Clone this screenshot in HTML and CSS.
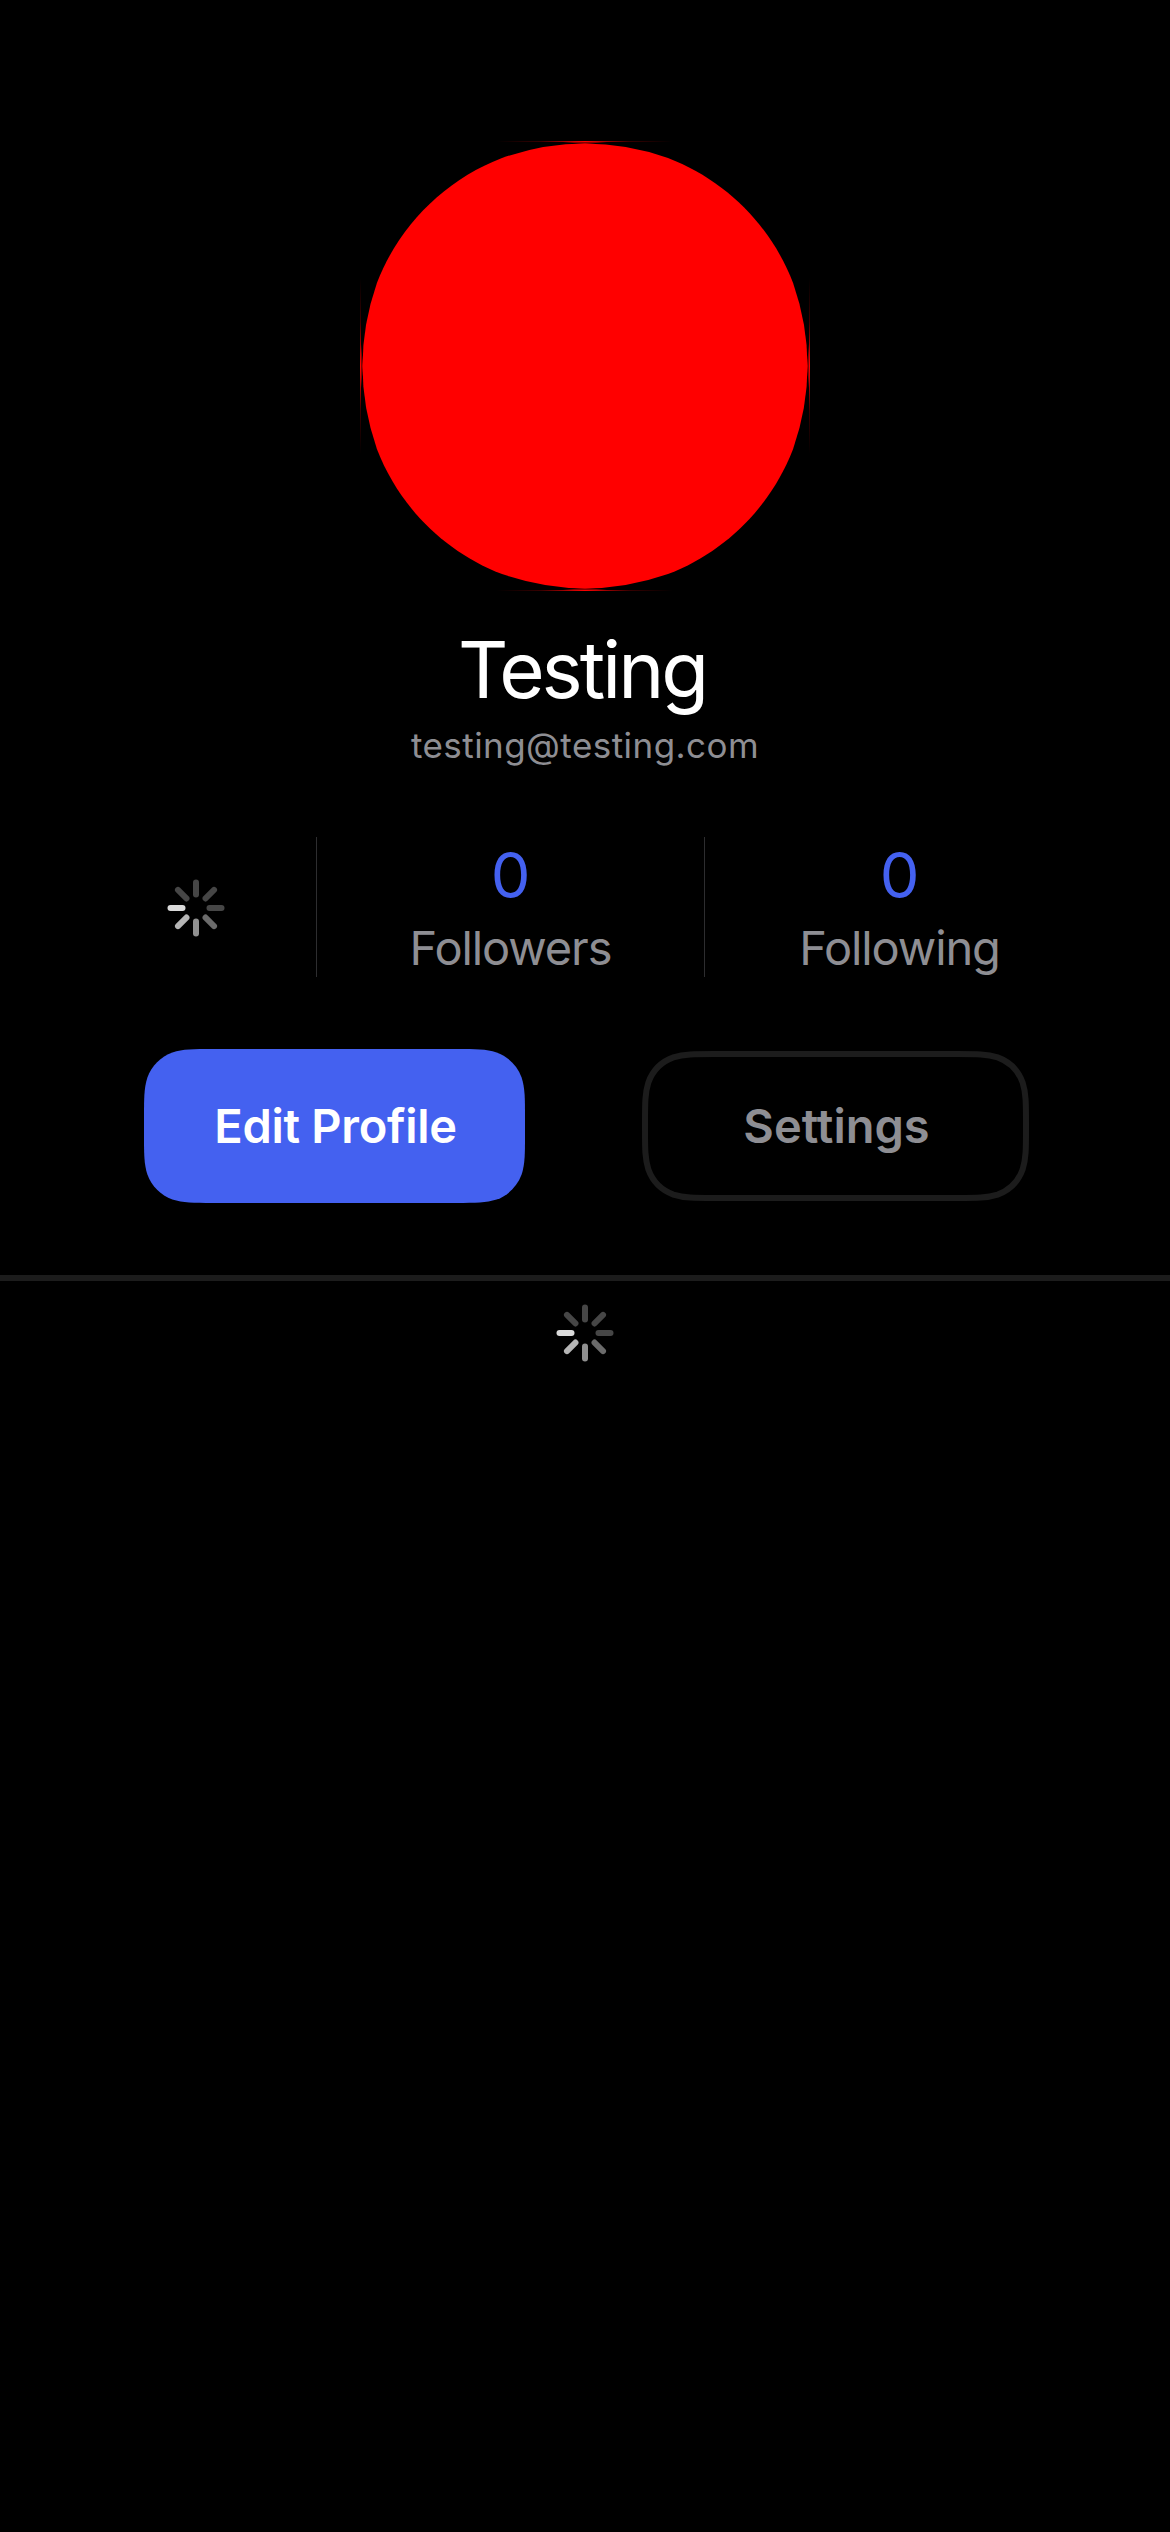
FILE: index.html
```html
<!DOCTYPE html>
<html lang="en">
<head>
<meta charset="utf-8">
<title>Profile</title>
<link rel="stylesheet" href="styles.css">
</head>
<body>
<svg class="defs" width="0" height="0" aria-hidden="true">
  <defs>
    <linearGradient id="edge"><stop offset="0" stop-color="#f00" stop-opacity="0"/><stop offset=".25" stop-color="#f00" stop-opacity=".22"/><stop offset=".5" stop-color="#f00"/><stop offset=".75" stop-color="#f00" stop-opacity=".22"/><stop offset="1" stop-color="#f00" stop-opacity="0"/></linearGradient>
    <g id="tip"><rect x="-88" y="-225" width="176" height="1" fill="url(#edge)"/><path d="M-22-224H22L0-222Z" fill="#f00" opacity=".5"/></g>
    <g id="spinner" stroke-width="6" stroke-linecap="round">
      <path d="M0-25.5V-13.5" stroke="#464646"/>
      <path d="M0-25.5V-13.5" stroke="#464646" transform="rotate(45)"/>
      <path d="M0-25.5V-13.5" stroke="#464646" transform="rotate(90)"/>
      <path d="M0-25.5V-13.5" stroke="#6b6b6b" transform="rotate(135)"/>
      <path d="M0-25.5V-13.5" stroke="#909090" transform="rotate(180)"/>
      <path d="M0-25.5V-13.5" stroke="#b5b5b5" transform="rotate(225)"/>
      <path d="M0-25.5V-13.5" stroke="#dadada" transform="rotate(270)"/>
      <path d="M0-25.5V-13.5" stroke="#464646" transform="rotate(315)"/>
    </g>
  </defs>
</svg>
<main class="profile">
  <svg class="avatar" viewBox="-225 -225 450 450" role="img" aria-label="Profile picture">
    <path fill="#f00" d="M0-222.5Q41.5-222.5 83-208.1C140.5-186 186-140.5 208.1-83Q222.5-41.5 222.5 0Q222.5 41.5 208.1 83C186 140.5 140.5 186 83 208.1Q41.5 222.5 0 222.5Q-41.5 222.5-83 208.1C-140.5 186-186 140.5-208.1 83Q-222.5 41.5-222.5 0Q-222.5-41.5-208.1-83C-186-140.5-140.5-186-83-208.1Q-41.5-222.5 0-222.5Z"/>
    <use href="#tip"/><use href="#tip" transform="rotate(90)"/><use href="#tip" transform="rotate(180)"/><use href="#tip" transform="rotate(270)"/>
  </svg>
  <h1 class="name">Testing</h1>
  <p class="email">testing@testing.com</p>
  <section class="stats">
    <div class="stat stat-loading"><svg class="spinner" viewBox="-30 -30 60 60"><use href="#spinner"/></svg></div>
    <div class="stat"><span class="count">0</span><span class="label">Followers</span></div>
    <div class="stat"><span class="count">0</span><span class="label">Following</span></div>
  </section>
  <div class="actions">
    <button class="button edit">
      <svg class="shape" viewBox="0 0 381 154"><path fill="#4461f0" d="M68.8 0H312.2C332 0 341.9 0 352.6 3.4C364.2 7.6 373.4 16.8 377.6 28.4C381 39.1 381 49 381 68.8V85.2C381 105 381 114.9 377.6 125.6C373.4 137.2 364.2 146.4 352.6 150.6C341.9 154 332 154 312.2 154H68.8C49 154 39.1 154 28.4 150.6C16.8 146.4 7.6 137.2 3.4 125.6C0 114.9 0 105 0 85.2V68.8C0 49 0 39.1 3.4 28.4C7.6 16.8 16.8 7.6 28.4 3.4C39.1 0 49 0 68.8 0Z"/></svg>
      <span class="caption">Edit Profile</span>
    </button>
    <button class="button settings">
      <svg class="shape" viewBox="-3 -3 387 150"><path fill="none" stroke="#1c1c1c" stroke-width="6" d="M68.8 0H312.2C332 0 341.9 0 352.6 3.4C364.2 7.6 373.4 16.8 377.6 28.4C381 39.1 381 49 381 68.8V75.2C381 95 381 104.9 377.6 115.6C373.4 127.2 364.2 136.4 352.6 140.6C341.9 144 332 144 312.2 144H68.8C49 144 39.1 144 28.4 140.6C16.8 136.4 7.6 127.2 3.4 115.6C0 104.9 0 95 0 75.2V68.8C0 49 0 39.1 3.4 28.4C7.6 16.8 16.8 7.6 28.4 3.4C39.1 0 49 0 68.8 0Z"/></svg>
      <span class="caption">Settings</span>
    </button>
  </div>
  <hr class="rule">
  <svg class="spinner feed-spinner" viewBox="-30 -30 60 60"><use href="#spinner"/></svg>
</main>
</body>
</html>
```

FILE: styles.css
```css
* { box-sizing: border-box; }
body {
  margin: 0;
  background: #000;
  color: #fff;
  font-family: Inter, "Liberation Sans", sans-serif;
}
.defs { display: block; height: 0; }
.profile {
  display: flex;
  flex-direction: column;
  align-items: center;
  width: 1170px;
  min-height: 2532px;
  padding-top: 141px;
}
.avatar { width: 450px; height: 450px; }
.name {
  margin: 32px 6px 0 0;
  font-size: 78px;
  font-weight: 400;
  line-height: 94px;
  letter-spacing: -3px;
}
.email {
  margin: 7px 0 0;
  color: #8e8e93;
  font-size: 35px;
  line-height: 43px;
  letter-spacing: 0.45px;
}
.stats {
  display: grid;
  grid-template-columns: 241px 388px 390px;
  width: 1020px;
  height: 140px;
  margin-top: 70px;
}
.stat {
  display: flex;
  flex-direction: column;
  align-items: center;
  border-left: 1px solid #2d2d2f;
}
.stat-loading {
  justify-content: center;
  padding-top: 1px;
  border-left: 0;
}
.spinner { width: 60px; height: 60px; }
.count {
  color: #4461f0;
  font-size: 63px;
  line-height: 76px;
}
.label {
  color: #8e8e93;
  font-size: 47px;
  line-height: 58px;
  margin-top: 6px;
  letter-spacing: -1.1px;
}
.actions {
  display: flex;
  align-items: center;
  gap: 117px;
  width: 885px;
  margin: 72px 0 0 3px;
}
.button {
  display: grid;
  place-items: center;
  padding: 0;
  border: 0;
  background: none;
  color: #fff;
  font: 600 47px/58px Inter, "Liberation Sans", sans-serif;
}
.edit { width: 381px; height: 154px; letter-spacing: -0.3px; }
.settings { width: 387px; height: 150px; color: #8e8e93; }
.shape { grid-area: 1 / 1; width: 100%; height: 100%; }
.caption { grid-area: 1 / 1; padding-left: 2px; }
.rule {
  align-self: stretch;
  height: 6px;
  margin: 72px 0 0;
  border: 0;
  background: #1c1c1c;
}
.feed-spinner { margin-top: 22px; }
```
